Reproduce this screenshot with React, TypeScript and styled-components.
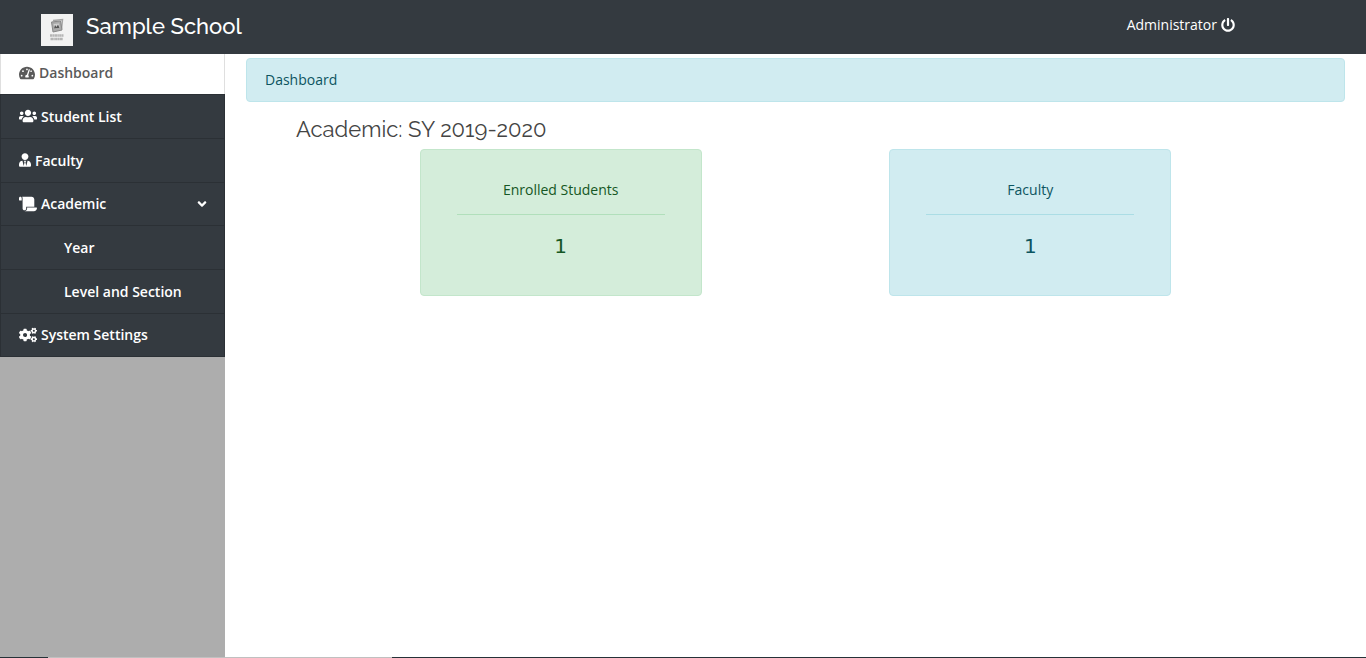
import React from "react";
import styled, { createGlobalStyle } from "styled-components";
import {
  FaTachometerAlt,
  FaUsers,
  FaUserTie,
  FaScroll,
  FaAngleDown,
  FaCogs,
  FaPowerOff,
} from "react-icons/fa";

const GlobalStyle = createGlobalStyle`
  *, *::before, *::after { box-sizing: border-box; }
  body {
    margin: 0;
    background: #fff;
    color: #444;
    font-family: "Open Sans", "Noto Sans", sans-serif;
    font-size: 14px;
    line-height: 21px;
  }
  svg { flex: none; display: block; }
`;

const Page = styled.div`
  min-height: 100vh;
  display: flex;
  flex-direction: column;
`;

const TopBar = styled.header`
  display: flex;
  align-items: flex-start;
  justify-content: space-between;
  height: 54px;
  padding: 14px 131px 0 41px;
  background: #343a40;
  color: #fff;
`;

const Brand = styled.div`
  display: flex;
  gap: 13px;
`;

const Title = styled.h1`
  margin: 0;
  font-family: Raleway, Lato, sans-serif;
  font-size: 22px;
  font-weight: 500;
  line-height: 24px;
`;

const UserLink = styled.a`
  display: flex;
  align-items: center;
  gap: 4px;
  color: #fff;
  text-decoration: none;
`;

const Body = styled.div`
  flex: 1;
  display: flex;
`;

const Sidebar = styled.nav`
  flex: none;
  width: 225px;
  background: #adadad;
`;

const NavItem = styled.a<{ $active?: boolean; $nested?: boolean }>`
  display: flex;
  align-items: center;
  gap: 4px;
  height: ${(p) => (p.$active ? 40 : 44)}px;
  padding: 0 15px ${(p) => (p.$active ? 3 : 1)}px ${(p) => (p.$nested ? 63 : 18)}px;
  border: 1px solid ${(p) => (p.$active ? "#dfdfdf" : "#2b3035")};
  border-width: ${(p) => (p.$active ? "0 1px" : "1px 1px 0")};
  background: ${(p) => (p.$active ? "#fff" : "#343a40")};
  color: ${(p) => (p.$active ? "#5a5a5a" : "#fff")};
  font-family: inherit;
  font-size: 14px;
  font-weight: 600;
  line-height: 21px;
  text-decoration: none;

  &:last-child { border-bottom-width: 1px; }
`;

const NavToggle = styled(NavItem).attrs({ as: "button", type: "button" })`
  width: 100%;
  height: 43px;
  cursor: pointer;

  svg:last-child { margin-left: auto; }
`;

const FacultyIcon = styled(FaUserTie)`
  width: 12px;
  height: 14px;
`;

const Main = styled.main`
  flex: 1;
  min-width: 0;
  padding: 4px 7px 16px;
`;

const PageBanner = styled.div`
  margin: 0 14px;
  padding: 10px 18px 11px;
  border: 1px solid #bee5eb;
  border-radius: 4px;
  background: #d1ecf1;
  color: #0c5460;
`;

const Heading = styled.h2`
  margin: 15px 64px 7px;
  font-family: Raleway, Lato, sans-serif;
  font-size: 22px;
  font-weight: 400;
  line-height: 25px;
`;

const Cards = styled.div`
  display: flex;
  justify-content: space-evenly;
`;

const tones = {
  green: { bg: "#d4edda", border: "#c3e6cb", line: "#b1dfbb", text: "#155724" },
  blue: { bg: "#d1ecf1", border: "#bee5eb", line: "#abdde5", text: "#0c5460" },
};

const Card = styled.section<{ $tone: keyof typeof tones }>`
  flex: 0 0 25%;
  padding: 29px 36px 34px;
  border: 1px solid ${(p) => tones[p.$tone].border};
  border-radius: 4px;
  background: ${(p) => tones[p.$tone].bg};
  color: ${(p) => tones[p.$tone].text};
  text-align: center;
`;

const CardLabel = styled.h3<{ $tone: keyof typeof tones }>`
  margin: 0 0 17px;
  padding-bottom: 14px;
  border-bottom: 1px solid ${(p) => tones[p.$tone].line};
  font-size: 14px;
  font-weight: 400;
  line-height: 21px;
`;

const CardValue = styled.p`
  margin: 0;
  font-family: "DejaVu Sans", sans-serif;
  font-size: 20px;
  font-weight: 400;
  line-height: 29px;
`;

const BottomEdge = styled.footer`
  display: flex;
  height: 1px;
  background: #263238;
`;

const BottomTrack = styled.span`
  width: 344px;
  margin-left: 48px;
  background: #c0c0c0;
`;

function Logo() {
  return (
    <svg width="32" height="32" viewBox="0 0 32 32" aria-label="School logo" role="img">
      <rect width="32" height="32" fill="#f2f2f2" />
      <path d="M12 6.5 L21.5 5.5 L20.5 15" fill="none" stroke="#a5a5a5" strokeWidth="1.5" />
      <path d="M10.5 8 L19.5 7 L21 16 L12 18 Z" fill="#aaa" stroke="#888" />
      <path d="M12.5 10 L18 9.4 L18.8 14 L13.4 15 Z" fill="#d0d0d0" />
      <path d="M13 14.5 L14 11 L15.5 13 L17 10.5 L18.5 14 Z" fill="#555" />
      <path d="M9 21.5 H22.5 M9.5 25 H22" stroke="#b5b5b5" strokeWidth="2.5" strokeDasharray="2.5 0.3 1.5 0.3" />
    </svg>
  );
}

export default function App() {
  return (
    <Page>
      <GlobalStyle />
      <TopBar>
        <Brand>
          <Logo />
          <Title>Sample School</Title>
        </Brand>
        <UserLink href="#logout">
          Administrator <FaPowerOff size={14} />
        </UserLink>
      </TopBar>
      <Body>
        <Sidebar>
          <NavItem href="#dashboard" $active>
            <FaTachometerAlt size={16} />
            Dashboard
          </NavItem>
          <NavItem href="#students">
            <FaUsers size={18} />
            Student List
          </NavItem>
          <NavItem href="#faculty">
            <FacultyIcon />
            Faculty
          </NavItem>
          <NavToggle aria-expanded="true">
            <FaScroll size={18} />
            Academic
            <FaAngleDown size={14} />
          </NavToggle>
          <NavItem href="#year" $nested>
            Year
          </NavItem>
          <NavItem href="#levels" $nested>
            Level and Section
          </NavItem>
          <NavItem href="#settings">
            <FaCogs size={18} />
            System Settings
          </NavItem>
        </Sidebar>
        <Main>
          <PageBanner>Dashboard</PageBanner>
          <Heading>Academic: SY 2019-2020</Heading>
          <Cards>
            <Card $tone="green">
              <CardLabel $tone="green">Enrolled Students</CardLabel>
              <CardValue>1</CardValue>
            </Card>
            <Card $tone="blue">
              <CardLabel $tone="blue">Faculty</CardLabel>
              <CardValue>1</CardValue>
            </Card>
          </Cards>
        </Main>
      </Body>
      <BottomEdge>
        <BottomTrack />
      </BottomEdge>
    </Page>
  );
}
